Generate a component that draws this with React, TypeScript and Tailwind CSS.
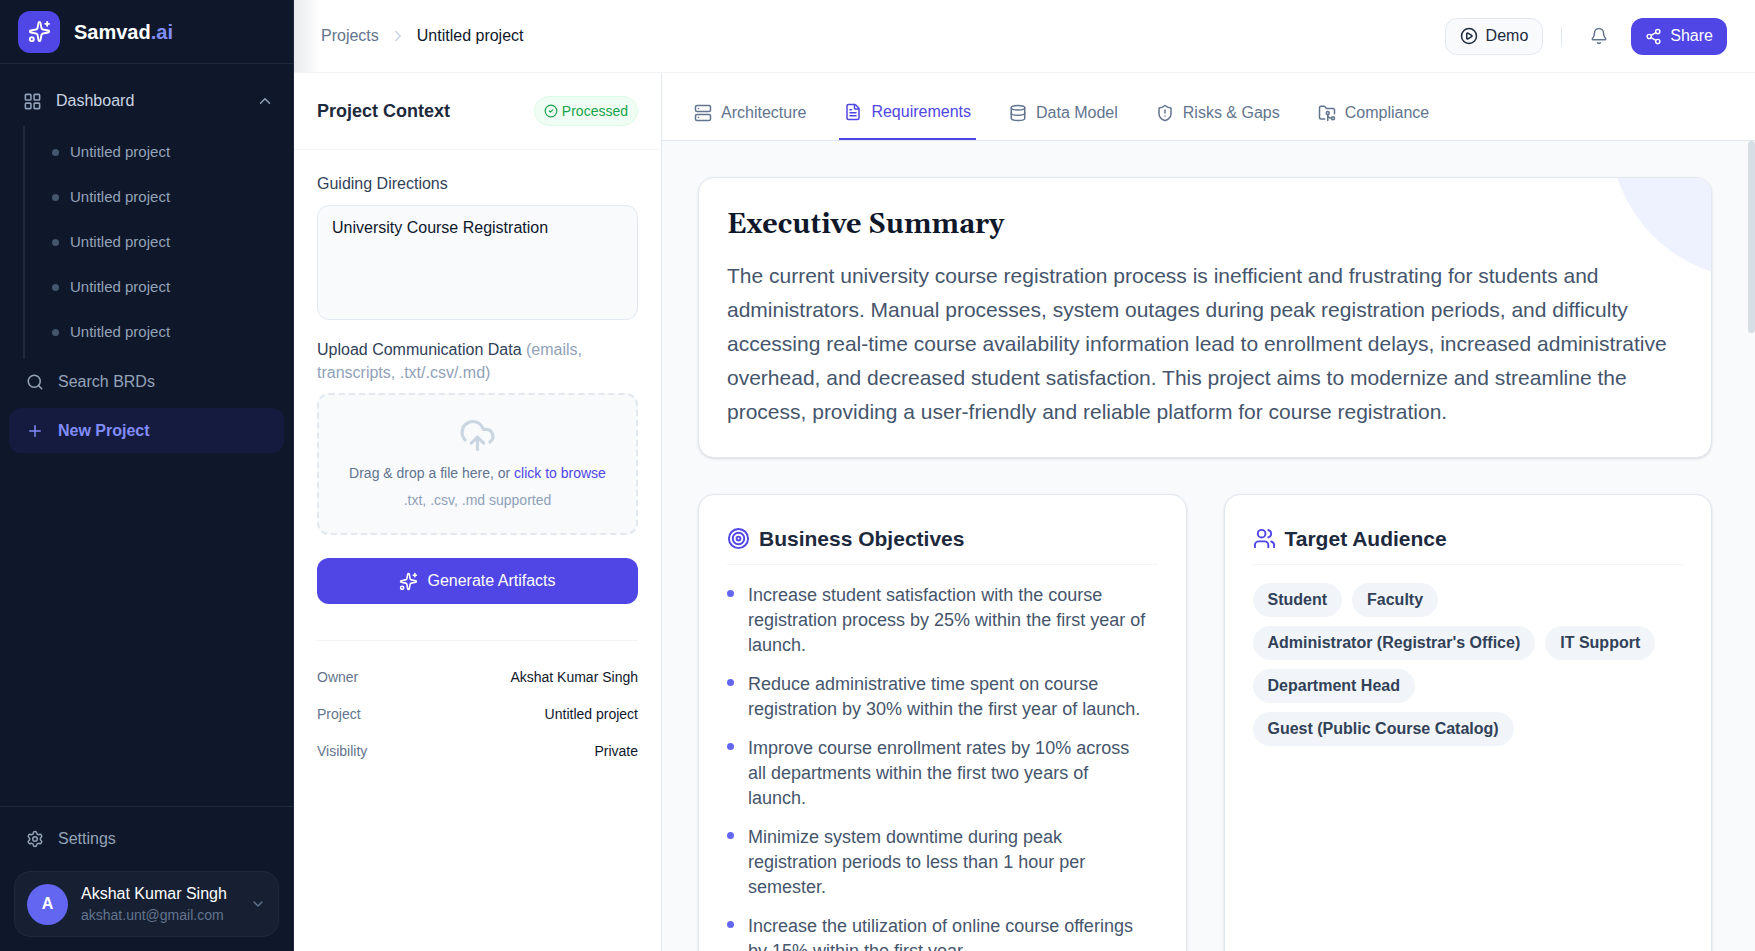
import { useState } from "react";
import {
  Bell,
  ChevronDown,
  ChevronRight,
  ChevronUp,
  CircleCheck,
  CirclePlay,
  CloudUpload,
  Database,
  FileText,
  FolderGit2,
  LayoutGrid,
  Plus,
  Search,
  Server,
  Settings,
  Share2,
  ShieldAlert,
  Sparkles,
  Target,
  Users,
} from "lucide-react";

const projects = [1, 2, 3, 4, 5].map((id) => ({ id, name: "Untitled project" }));

const tabs = [
  { id: "architecture", label: "Architecture", icon: Server },
  { id: "requirements", label: "Requirements", icon: FileText },
  { id: "data-model", label: "Data Model", icon: Database },
  { id: "risks", label: "Risks & Gaps", icon: ShieldAlert },
  { id: "compliance", label: "Compliance", icon: FolderGit2 },
];

const details = [
  { label: "Owner", value: "Akshat Kumar Singh" },
  { label: "Project", value: "Untitled project" },
  { label: "Visibility", value: "Private" },
];

const objectives = [
  "Increase student satisfaction with the course registration process by 25% within the first year of launch.",
  "Reduce administrative time spent on course registration by 30% within the first year of launch.",
  "Improve course enrollment rates by 10% across all departments within the first two years of launch.",
  "Minimize system downtime during peak registration periods to less than 1 hour per semester.",
  "Increase the utilization of online course offerings by 15% within the first year.",
];

const audience = [
  "Student",
  "Faculty",
  "Administrator (Registrar's Office)",
  "IT Support",
  "Department Head",
  "Guest (Public Course Catalog)",
];

function Sidebar() {
  return (
    <aside className="flex w-[294px] shrink-0 flex-col border-r border-slate-800 bg-[#0f172a] text-base text-[#94a3b8]">
      <div className="flex h-16 shrink-0 items-center gap-[14px] border-b border-slate-800 pl-[18px]">
        <div className="flex size-[42px] items-center justify-center rounded-xl bg-[#4f46e5] text-white">
          <Sparkles size={23} />
        </div>
        <span className="text-xl font-bold text-white">
          Samvad<span className="text-[#818cf8]">.ai</span>
        </span>
      </div>

      <nav className="flex flex-1 flex-col px-[9px] pt-[14px]">
        <button
          type="button"
          aria-expanded="true"
          className="flex h-[46px] items-center gap-[14px] pl-[14px] pr-[10px] text-slate-300"
        >
          <LayoutGrid size={19} className="text-slate-400" />
          <span className="flex-1 text-left">Dashboard</span>
          <ChevronUp size={18} className="text-slate-400" />
        </button>

        <ul className="ml-[14px] mt-[2px] border-l-2 border-slate-800 py-1">
          {projects.map((project) => (
            <li key={project.id}>
              <a
                href="#"
                className="flex h-[45px] items-center gap-[11px] pl-[27px] text-[15px]"
              >
                <span className="size-[7px] rounded-full bg-slate-600" />
                {project.name}
              </a>
            </li>
          ))}
        </ul>

        <a href="#" className="flex h-[45px] items-center gap-[14px] pl-[17px]">
          <Search size={18} />
          Search BRDs
        </a>
        <a
          href="#"
          className="mt-1 flex h-[45px] items-center gap-[14px] rounded-xl bg-[#151b3e] pl-[17px] font-bold text-[#818cf8]"
        >
          <Plus size={18} />
          New Project
        </a>
      </nav>

      <div className="border-t border-slate-800 px-[14px] pb-[14px] pt-[9px]">
        <a href="#" className="flex h-[45px] items-center gap-[14px] pl-3">
          <Settings size={18} />
          Settings
        </a>
        <button
          type="button"
          className="mt-[10px] flex h-[66px] w-full items-center gap-[13px] rounded-2xl border border-slate-800 bg-[#172032] px-3 text-left"
        >
          <span className="flex size-[41px] items-center justify-center rounded-full bg-[#6366f1] font-bold text-white">
            A
          </span>
          <span className="flex-1">
            <span className="block leading-[22px] text-white">
              Akshat Kumar Singh
            </span>
            <span className="block text-sm text-slate-500">
              akshat.unt@gmail.com
            </span>
          </span>
          <ChevronDown size={16} className="text-slate-500" />
        </button>
      </div>
    </aside>
  );
}

function Header() {
  return (
    <header className="flex h-[73px] shrink-0 items-center justify-between border-b border-slate-100 bg-linear-to-r from-[#e9eaec] via-white via-[26px] to-white pl-[27px] pr-7 text-base">
      <nav aria-label="Breadcrumb" className="flex items-center gap-[10px]">
        <a href="#" className="text-slate-500">
          Projects
        </a>
        <ChevronRight size={18} className="text-slate-300" />
        <span className="text-slate-900">Untitled project</span>
      </nav>

      <div className="flex items-center">
        <button
          type="button"
          className="flex h-[37px] items-center gap-2 rounded-xl border border-slate-200 bg-slate-50 px-[14px] text-slate-800"
        >
          <CirclePlay size={18} />
          Demo
        </button>
        <span className="mx-[18px] h-[19px] w-px bg-slate-200" />
        <button
          type="button"
          aria-label="Notifications"
          className="flex size-[37px] items-center justify-center text-slate-500"
        >
          <Bell size={18} />
        </button>
        <button
          type="button"
          className="ml-[14px] flex h-[37px] items-center gap-2 rounded-xl bg-[#4f46e5] px-[14px] text-white"
        >
          <Share2 size={17} />
          Share
        </button>
      </div>
    </header>
  );
}

function ContextPanel() {
  return (
    <section className="flex w-[368px] shrink-0 flex-col border-r border-slate-200 bg-white">
      <div className="flex h-[77px] items-center justify-between border-b border-slate-100 px-[23px]">
        <h2 className="text-lg font-bold text-slate-800">Project Context</h2>
        <span className="flex h-[30px] items-center gap-1 rounded-full border border-green-100 bg-[#f0fdf4] px-[9px] text-sm text-[#16a34a]">
          <CircleCheck size={14} />
          Processed
        </span>
      </div>

      <div className="flex flex-col px-[23px] pt-[22px]">
        <label htmlFor="directions" className="text-base leading-[23px] text-slate-700">
          Guiding Directions
        </label>
        <textarea
          id="directions"
          defaultValue="University Course Registration"
          className="mt-[10px] h-[115px] resize-none rounded-xl border border-slate-200 bg-slate-50 px-[14px] py-[10px] text-base text-slate-900 outline-none"
        />

        <label htmlFor="upload" className="mt-[18px] text-base leading-[23px] text-slate-700">
          Upload Communication Data{" "}
          <span className="text-slate-400">
            (emails, transcripts, .txt/.csv/.md)
          </span>
        </label>
        <label
          htmlFor="upload"
          className="relative mt-[9px] flex h-[142px] flex-col items-center rounded-xl border-2 border-dashed border-slate-200 bg-slate-50 pt-[22px] text-sm"
        >
          <CloudUpload size={37} className="text-slate-300" />
          <span className="mt-[9px] text-slate-500">
            Drag &amp; drop a file here, or{" "}
            <span className="text-[#4f46e5]">click to browse</span>
          </span>
          <span className="mt-[7px] text-slate-400">.txt, .csv, .md supported</span>
          <input id="upload" type="file" accept=".txt,.csv,.md" className="sr-only" />
        </label>

        <button
          type="button"
          className="mt-[23px] flex h-[46px] items-center justify-center gap-[9px] rounded-xl bg-[#4f46e5] text-base text-white"
        >
          <Sparkles size={19} />
          Generate Artifacts
        </button>

        <dl className="mt-9 flex flex-col gap-[17px] border-t border-slate-100 pt-[26px] text-sm">
          {details.map((item) => (
            <div key={item.label} className="flex justify-between">
              <dt className="text-slate-500">{item.label}</dt>
              <dd className="text-slate-900">{item.value}</dd>
            </div>
          ))}
        </dl>
      </div>
    </section>
  );
}

function Tabs() {
  const [active, setActive] = useState("requirements");

  return (
    <div
      role="tablist"
      className="flex h-[68px] shrink-0 items-stretch gap-7 border-b border-slate-200 bg-white pl-[27px] text-base"
    >
      {tabs.map(({ id, label, icon: Icon }) => (
        <button
          key={id}
          type="button"
          role="tab"
          aria-selected={id === active}
          onClick={() => setActive(id)}
          className={
            id === active
              ? "flex items-center gap-[9px] border-b-2 border-[#4f46e5] px-[5px] pt-[13px] text-[#4f46e5]"
              : "flex items-center gap-[9px] px-[5px] pt-[13px] text-slate-500"
          }
        >
          <Icon size={18} />
          {label}
        </button>
      ))}
    </div>
  );
}

function Requirements() {
  return (
    <div className="relative min-h-0 flex-1 bg-slate-50">
      <div className="h-full overflow-y-auto pb-9 pl-9 pr-[43px] pt-9 [scrollbar-width:none]">
        <section className="relative overflow-hidden rounded-2xl border border-slate-200 bg-white p-7 shadow-sm">
          <div
            aria-hidden
            className="absolute -right-[46px] -top-[46px] size-[147px] rounded-bl-full bg-[#eef2ff]"
          />
          <h2 className="font-[Georgia,Gelasio,'Liberation_Serif',serif] text-[27px] font-bold leading-[38px] text-slate-900">
            Executive Summary
          </h2>
          <p className="mt-[15px] text-[21px] leading-[34px] text-slate-600">
            The current university course registration process is inefficient
            and frustrating for students and administrators. Manual processes,
            system outages during peak registration periods, and difficulty
            accessing real-time course availability information lead to
            enrollment delays, increased administrative overhead, and decreased
            student satisfaction. This project aims to modernize and streamline
            the process, providing a user-friendly and reliable platform for
            course registration.
          </p>
        </section>

        <div className="mt-9 grid grid-cols-2 gap-[37px]">
          <section className="rounded-2xl border border-slate-200 bg-white p-7 shadow-sm">
            <h3 className="flex items-center gap-[9px] border-b border-slate-100 pb-[10px] text-[21px] font-bold leading-[31px] text-slate-800">
              <Target size={23} className="text-[#4f46e5]" />
              Business Objectives
            </h3>
            <ul className="mt-[18px] flex flex-col gap-[14px] pr-[10px] text-lg leading-[25px] text-slate-600">
              {objectives.map((text) => (
                <li key={text} className="flex gap-[14px]">
                  <span className="mt-[7px] size-[7px] shrink-0 rounded-full bg-[#6366f1]" />
                  <span>{text}</span>
                </li>
              ))}
            </ul>
          </section>

          <section className="rounded-2xl border border-slate-200 bg-white p-7 shadow-sm">
            <h3 className="flex items-center gap-[9px] border-b border-slate-100 pb-[10px] text-[21px] font-bold leading-[31px] text-slate-800">
              <Users size={23} className="text-[#4f46e5]" />
              Target Audience
            </h3>
            <ul className="mt-[18px] flex flex-wrap gap-x-[10px] gap-y-[9px] text-base font-bold text-slate-700">
              {audience.map((name) => (
                <li
                  key={name}
                  className="flex h-[34px] items-center rounded-full bg-slate-100 px-[15px]"
                >
                  {name}
                </li>
              ))}
            </ul>
          </section>
        </div>
      </div>

      {/* scroll thumb */}
      <div
        aria-hidden
        className="absolute right-0 top-0 h-48 w-[7px] rounded-full bg-[#d8dee5]"
      />
    </div>
  );
}

export default function App() {
  return (
    <div className="flex h-screen overflow-hidden bg-slate-50 font-['Liberation_Sans',Arial,sans-serif]">
      <Sidebar />
      <div className="flex min-w-0 flex-1 flex-col">
        <Header />
        <div className="flex min-h-0 flex-1">
          <ContextPanel />
          <main className="flex min-w-0 flex-1 flex-col">
            <Tabs />
            <Requirements />
          </main>
        </div>
      </div>
    </div>
  );
}
